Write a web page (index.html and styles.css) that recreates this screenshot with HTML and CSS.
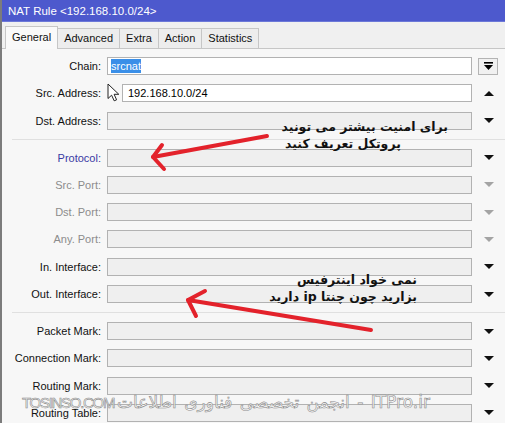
FILE: index.html
```html
<!DOCTYPE html>
<html lang="en">
<head>
    <meta charset="UTF-8">
    <meta name="viewport" content="width=device-width, initial-scale=1.0">
    <title>NAT Rule</title>
    <link rel="stylesheet" href="styles.css">
</head>
<body>
    <div class="window">
        <div class="titlebar">NAT Rule &lt;192.168.10.0/24&gt;</div>
        <div class="tabs">
            <div class="tab active">General</div>
            <div class="tab">Advanced</div>
            <div class="tab">Extra</div>
            <div class="tab">Action</div>
            <div class="tab">Statistics</div>
        </div>
        <div class="panel">
            <div class="section">
                <div class="row">
                    <span class="label">Chain:</span>
                    <div class="field white"><span class="selected">srcnat</span></div>
                    <span class="side">
                        <span class="btn">
                            <svg width="9" height="9" viewBox="0 0 9 9"><rect x="0" y="0" width="9" height="1.6" fill="#000"/><polygon points="0,3 9,3 4.5,8" fill="#000"/></svg>
                        </span>
                    </span>
                </div>
                <div class="row">
                    <span class="label">Src. Address:</span>
                    <span class="invert">
                        <svg class="cursor" width="14" height="19" viewBox="0 0 14 19"><path d="M1 1 L1 15.5 L4.6 12.2 L7.2 17.8 L9.6 16.8 L7.1 11.3 L11.8 11.3 Z" fill="#fff" stroke="#222" stroke-width="1"/></svg>
                    </span>
                    <div class="field white short">192.168.10.0/24</div>
                    <span class="side"><span class="tri up"></span></span>
                </div>
                <div class="row">
                    <span class="label">Dst. Address:</span>
                    <div class="field"></div>
                    <span class="side"><span class="tri"></span></span>
                </div>
            </div>
            <div class="sep"></div>
            <div class="section">
                <div class="row">
                    <span class="label link">Protocol:</span>
                    <div class="field"></div>
                    <span class="side"><span class="tri"></span></span>
                </div>
                <div class="row">
                    <span class="label muted">Src. Port:</span>
                    <div class="field"></div>
                    <span class="side"><span class="tri off"></span></span>
                </div>
                <div class="row">
                    <span class="label muted">Dst. Port:</span>
                    <div class="field"></div>
                    <span class="side"><span class="tri off"></span></span>
                </div>
                <div class="row">
                    <span class="label muted">Any. Port:</span>
                    <div class="field"></div>
                    <span class="side"><span class="tri off"></span></span>
                </div>
                <div class="row">
                    <span class="label">In. Interface:</span>
                    <div class="field"></div>
                    <span class="side"><span class="tri"></span></span>
                </div>
                <div class="row">
                    <span class="label">Out. Interface:</span>
                    <div class="field"></div>
                    <span class="side"><span class="tri"></span></span>
                </div>
            </div>
            <div class="sep"></div>
            <div class="section">
                <div class="row">
                    <span class="label">Packet Mark:</span>
                    <div class="field"></div>
                    <span class="side"><span class="tri"></span></span>
                </div>
                <div class="row">
                    <span class="label">Connection Mark:</span>
                    <div class="field"></div>
                    <span class="side"><span class="tri"></span></span>
                </div>
                <div class="row">
                    <span class="label">Routing Mark:</span>
                    <div class="field"></div>
                    <span class="side"><span class="tri"></span></span>
                </div>
                <div class="row">
                    <span class="label">Routing Table:</span>
                    <div class="field"></div>
                    <span class="side"><span class="tri"></span></span>
                </div>
            </div>
        </div>

        <!-- red marks drawn over the screenshot -->
        <svg class="marks" width="505" height="423" viewBox="0 0 505 423">
            <g fill="none" stroke="#e3222b" stroke-width="4" stroke-linecap="round" stroke-linejoin="round">
                <path d="M267 136 L153 157"/>
                <path d="M162 145 L153 157 L164 169"/>
                <path d="M371 330 L188 300"/>
                <path d="M205 291 L188 300 L196 316"/>
            </g>
        </svg>
        <div class="note note-one" dir="rtl">برای امنیت بیشتر می تونید<br>پروتکل تعریف کنید</div>
        <div class="note note-two" dir="rtl">نمی خواد اینترفیس<br>بزارید چون چنتا ip دارید</div>
        <div class="watermark">TOSINSO.COM<span class="wm-fa" dir="rtl">ITPro.ir - انجمن تخصصی فناوری اطلاعات</span></div>
    </div>
</body>
</html>
```

FILE: styles.css
```css
body {
    margin: 0;
    padding: 0;
    background-color: #f0f0f0;
    font-family: "Liberation Sans", Arial, sans-serif;
    font-size: 11px;
    color: #000;
}
.window {
    position: relative;
    width: 505px;
    height: 423px;
    overflow: hidden;
    box-sizing: border-box;
    border-left: 2px solid #7c7c7c;
    background-color: #f0f0f0;
}
.titlebar {
    height: 22px;
    line-height: 22px;
    padding-left: 6px;
    background-color: #4d59cd;
    border-bottom: 1px solid #6c78d8;
    box-sizing: border-box;
    color: white;
    font-size: 11.5px;
}
.tabs {
    display: flex;
    align-items: flex-end;
    height: 26px;
    padding-left: 3px;
}
.tab {
    height: 19px;
    line-height: 19px;
    padding: 0 6px;
    margin-right: -1px;
    border: 1px solid #c6c6c6;
    border-bottom: none;
    background-color: #ededed;
    color: #111;
}
.tab.active {
    position: relative;
    z-index: 1;
    height: 22px;
    line-height: 21px;
    margin-bottom: -1px;
    background-color: #f9f9f9;
}
.panel {
    border-top: 1px solid #c6c6c6;
    background-color: #f7f7f7;
    padding-top: 8px;
    height: 400px;
}
.section {
    display: flex;
    flex-direction: column;
    gap: 9.3px;
}
.sep {
    height: 1px;
    margin: 9px 0 9px 10px;
    background-color: #e0e0e0;
}
.row {
    display: flex;
    align-items: center;
    height: 18px;
}
.label {
    width: 99px;
    text-align: right;
    color: #111;
}
.label.link {
    color: #3a3aa4;
}
.label.muted {
    color: #8c8c8c;
}
.field {
    width: 365px;
    height: 18px;
    margin-left: 6px;
    box-sizing: border-box;
    border: 1px solid #b2b2b2;
    background-color: #efefef;
    line-height: 16px;
    padding-left: 3px;
    white-space: nowrap;
}
.field.white {
    background-color: #fff;
}
.field.short {
    width: 350px;
    margin-left: 0;
    padding-left: 5px;
}
.selected {
    background-color: #3a8fe8;
    color: white;
    padding: 1px 0;
}
.invert {
    width: 15px;
    height: 18px;
    margin-left: 6px;
}
.cursor {
    display: block;
    margin-top: -1px;
}
.side {
    width: 31px;
    display: flex;
    justify-content: center;
    align-items: center;
}
.btn {
    width: 20px;
    height: 17px;
    margin-left: 1px;
    box-sizing: border-box;
    border: 1px solid #b4b4b4;
    background-color: #f1f1f1;
    display: flex;
    justify-content: center;
    align-items: center;
}
.tri {
    width: 0;
    height: 0;
    margin-left: 2px;
    border-left: 5px solid transparent;
    border-right: 5px solid transparent;
    border-top: 5px solid #111;
}
.tri.up {
    border-top: none;
    border-bottom: 5px solid #111;
}
.tri.off {
    border-top-color: #a4a4a4;
}
.marks {
    position: absolute;
    left: -2px;
    top: 0;
    pointer-events: none;
}
.note {
    position: absolute;
    font-family: "DejaVu Sans", sans-serif;
    font-weight: bold;
    font-size: 12.5px;
    line-height: 17px;
    color: #111;
    white-space: nowrap;
}
.note-one {
    left: 283px;
    top: 118px;
    width: 163px;
    text-align: left;
}
.note-two {
    left: 266px;
    top: 271px;
    width: 149px;
    text-align: right;
}
.watermark {
    position: absolute;
    left: 20px;
    top: 393px;
    font-family: "Liberation Sans", Arial, sans-serif;
    font-size: 15px;
    line-height: 18px;
    letter-spacing: -1.3px;
    color: rgba(255, 255, 255, 0.85);
    -webkit-text-stroke: 0.6px #8a8a8a;
    white-space: nowrap;
}
.wm-fa {
    display: inline-block;
    margin-left: 3px;
    font-family: "DejaVu Sans", sans-serif;
    font-size: 17px;
    letter-spacing: 0;
    word-spacing: 2px;
}
```
